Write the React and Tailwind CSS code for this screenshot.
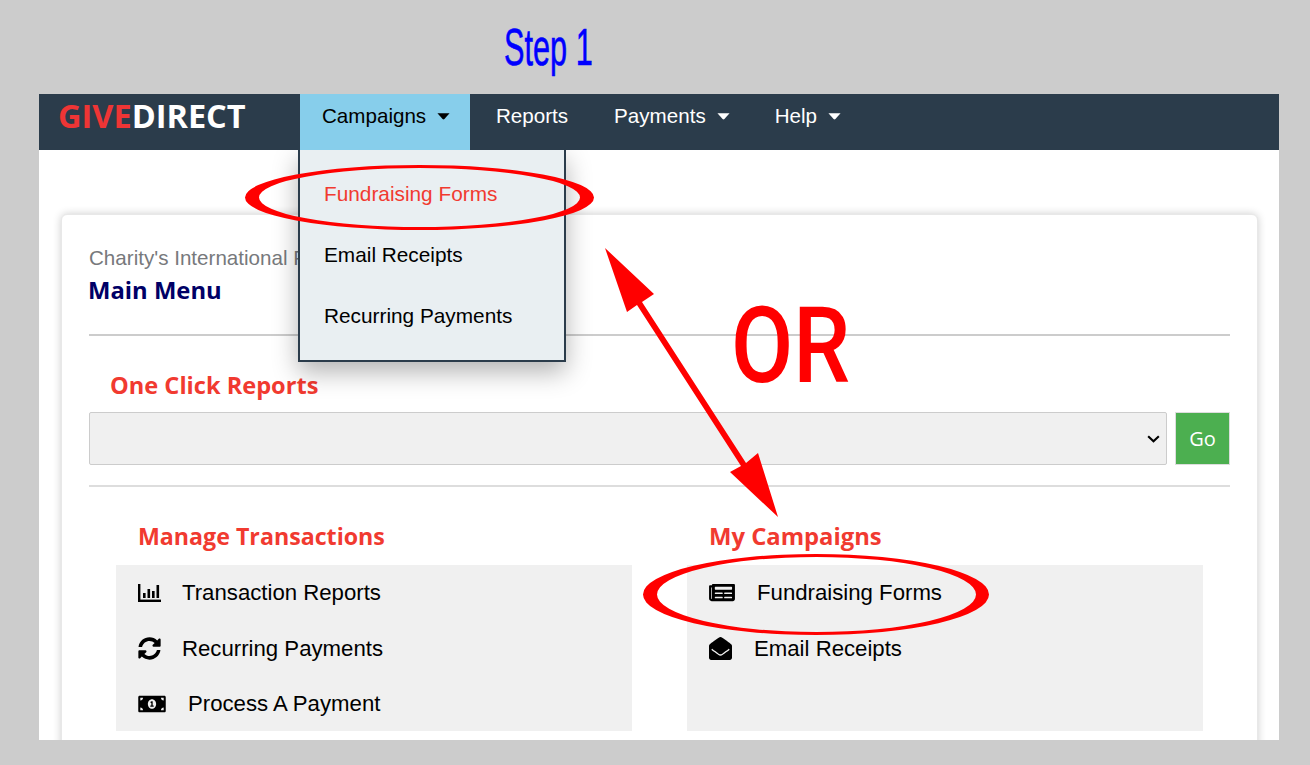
import React from "react";
import { FaSyncAlt, FaMoneyBillAlt, FaNewspaper, FaEnvelopeOpen } from "react-icons/fa";

const Caret = ({ className }) => (
  <svg viewBox="0 0 14 7" className={`w-[13px] h-[7px] ${className}`} fill="currentColor">
    <path d="M0.5 0 L13.5 0 L8 6.2 Q7 7 6 6.2 Z" />
  </svg>
);

const NavLink = ({ children, caret, className }) => (
  <div className={`flex items-center h-full pb-[12px] text-white text-[20.6px] ${className}`}>
    <span>{children}</span>
    {caret && <Caret className="ml-[11px]" />}
  </div>
);

const ChartIcon = () => (
  <svg viewBox="0 0 23 18" className="w-[23px] h-[18px]" fill="currentColor">
    <rect x="0" y="0" width="2.4" height="18" />
    <rect x="0" y="15.6" width="23" height="2.4" />
    <rect x="5" y="9" width="2.6" height="5" />
    <rect x="9.5" y="5" width="2.6" height="9" />
    <rect x="14" y="7" width="2.6" height="7" />
    <rect x="18.5" y="1" width="2.6" height="13" />
  </svg>
);

const Row = ({ icon, iconBox, children }) => (
  <div className="flex items-center h-[55.5px] pl-[22px] text-black text-[22.2px]">
    <div className={`flex items-center shrink-0 ${iconBox}`}>{icon}</div>
    <span>{children}</span>
  </div>
);

const heading = "font-['Open_Sans',sans-serif] font-bold text-[#f13a30] leading-[30px]";

export default function App() {
  return (
    <div className="relative h-[765px] w-[1310px] overflow-hidden bg-[#cccccc] pt-[94px] pl-[39px] pr-[31px] pb-[25px] font-['Liberation_Sans',sans-serif]">
      <div className="relative h-[646px] bg-white overflow-hidden">
        <nav className="relative z-10 flex h-[56px] bg-[#2b3c4b]">
          <div className="w-[261px] pl-[19px] flex items-center font-['Open_Sans',sans-serif] font-bold text-[32.5px] leading-none pb-[12px]">
            <span className="text-[#ee3535]">GIVE</span>
            <span className="text-white">DIRECT</span>
          </div>
          <div className="flex items-center h-full w-[170px] pl-[22px] pb-[12px] bg-[#87ceeb] text-black text-[20.6px]">
            <span>Campaigns</span>
            <Caret className="ml-[11px]" />
          </div>
          <NavLink className="ml-[26px]">Reports</NavLink>
          <NavLink caret className="ml-[46px]">Payments</NavLink>
          <NavLink caret className="ml-[45px]">Help</NavLink>
        </nav>

        <div className="ml-[22px] mr-[21px] mt-[64px] h-[600px] rounded-[6px] border border-[#e8e8e8] bg-white shadow-[0_0_8px_rgba(0,0,0,0.2)] px-[27px]">
          <div className="mt-[29px] whitespace-nowrap text-[20.6px] leading-[28px] text-[#77797c]">Charity's International Fund</div>
          <div className="font-['Open_Sans',sans-serif] font-bold text-[23.8px] leading-[36px] text-[#000066] -ml-[1px]">Main Menu</div>
          <div className="mt-[26px] h-[2px] bg-[#cccccc]" />
          <div className={`${heading} text-[23.6px] mt-[34px] ml-[21px]`}>One Click Reports</div>
          <div className="mt-[12px] flex gap-[8px]">
            <div className="relative flex-1 h-[53px]">
              <select className="w-full h-full appearance-none bg-[#f0f0f0] border border-[#cccccc] rounded-[2px]" />
              <svg viewBox="0 0 14 9" className="absolute right-[7px] top-[23px] w-[13px] h-[8px]" fill="none" stroke="black" strokeWidth="2.4">
                <path d="M1 1.5 L7 7 L13 1.5" />
              </svg>
            </div>
            <button className="w-[55px] h-[53px] bg-[#4caf50] border border-[#dddddd] text-white font-['Open_Sans',sans-serif] text-[20px]">Go</button>
          </div>
          <div className="mt-[20px] h-[2px] bg-[#dddddd]" />

          <div className="mt-[34px] ml-[27px] flex gap-[55px]">
            <div className="w-[516px]">
              <div className={`${heading} text-[23.2px] pl-[22px] mb-[14px]`}>Manage Transactions</div>
              <div className="h-[166px] bg-[#f0f0f0]">
                <Row iconBox="w-[44px]" icon={<ChartIcon />}>Transaction Reports</Row>
                <Row iconBox="w-[44px]" icon={<FaSyncAlt className="w-[23px] h-[23px]" />}>Recurring Payments</Row>
                <Row iconBox="w-[50px]" icon={<FaMoneyBillAlt className="w-[28px] h-[22px]" />}>Process A Payment</Row>
              </div>
            </div>
            <div className="w-[516px]">
              <div className={`${heading} text-[23.8px] pl-[22px] mb-[14px]`}>My Campaigns</div>
              <div className="h-[166px] bg-[#f0f0f0]">
                <Row iconBox="w-[48px]" icon={<FaNewspaper className="w-[26px] h-[23px]" />}>Fundraising Forms</Row>
                <Row iconBox="w-[45px]" icon={<FaEnvelopeOpen className="w-[23px] h-[23px]" />}>Email Receipts</Row>
              </div>
            </div>
          </div>
        </div>

        <div className="absolute left-[259px] top-[56px] w-[268px] h-[212px] border-2 border-t-0 border-[#2b3c4b] bg-[#e9eff2] pl-[24px] pt-[14px] text-[20.8px] shadow-[0_10px_24px_rgba(0,0,0,0.3)]">
          <div className="h-[61px] leading-[60px] text-[#f13a30]">Fundraising Forms</div>
          <div className="h-[61px] leading-[60px] text-black">Email Receipts</div>
          <div className="h-[61px] leading-[60px] text-black">Recurring Payments</div>
        </div>
      </div>

      <div className="absolute left-[504px] top-[13px] origin-left scale-x-[0.59] text-[52px] leading-[68px] text-[#0000ff] whitespace-nowrap [-webkit-text-stroke:0.6px_#0000ff]">Step 1</div>
      <div className="absolute left-[731px] top-[285px] origin-left scale-x-[0.86] font-['Roboto',sans-serif] font-medium text-[105px] leading-[123px] text-[#ff0000] whitespace-nowrap">OR</div>

      <svg className="absolute left-0 top-0 w-[1310px] h-[765px] pointer-events-none" viewBox="0 0 1310 765">
        <path fill="#ff0000" fillRule="evenodd" d="M245 197.5 a174.5 32.5 0 1 0 349 0 a174.5 32.5 0 1 0 -349 0 Z M259 197.5 a160.5 29.5 0 1 0 321 0 a160.5 29.5 0 1 0 -321 0 Z" />
        <path fill="#ff0000" fillRule="evenodd" d="M643 594.5 a173 40.5 0 1 0 346 0 a173 40.5 0 1 0 -346 0 Z M657 594.5 a159.5 37.5 0 1 0 319 0 a159.5 37.5 0 1 0 -319 0 Z" />
        <path fill="#ff0000" d="M605 248 L654 294 L642 302 L746 463 L758 453 L778 517 L730 472 L741 466 L637 305 L627 312 Z" />
      </svg>
    </div>
  );
}
